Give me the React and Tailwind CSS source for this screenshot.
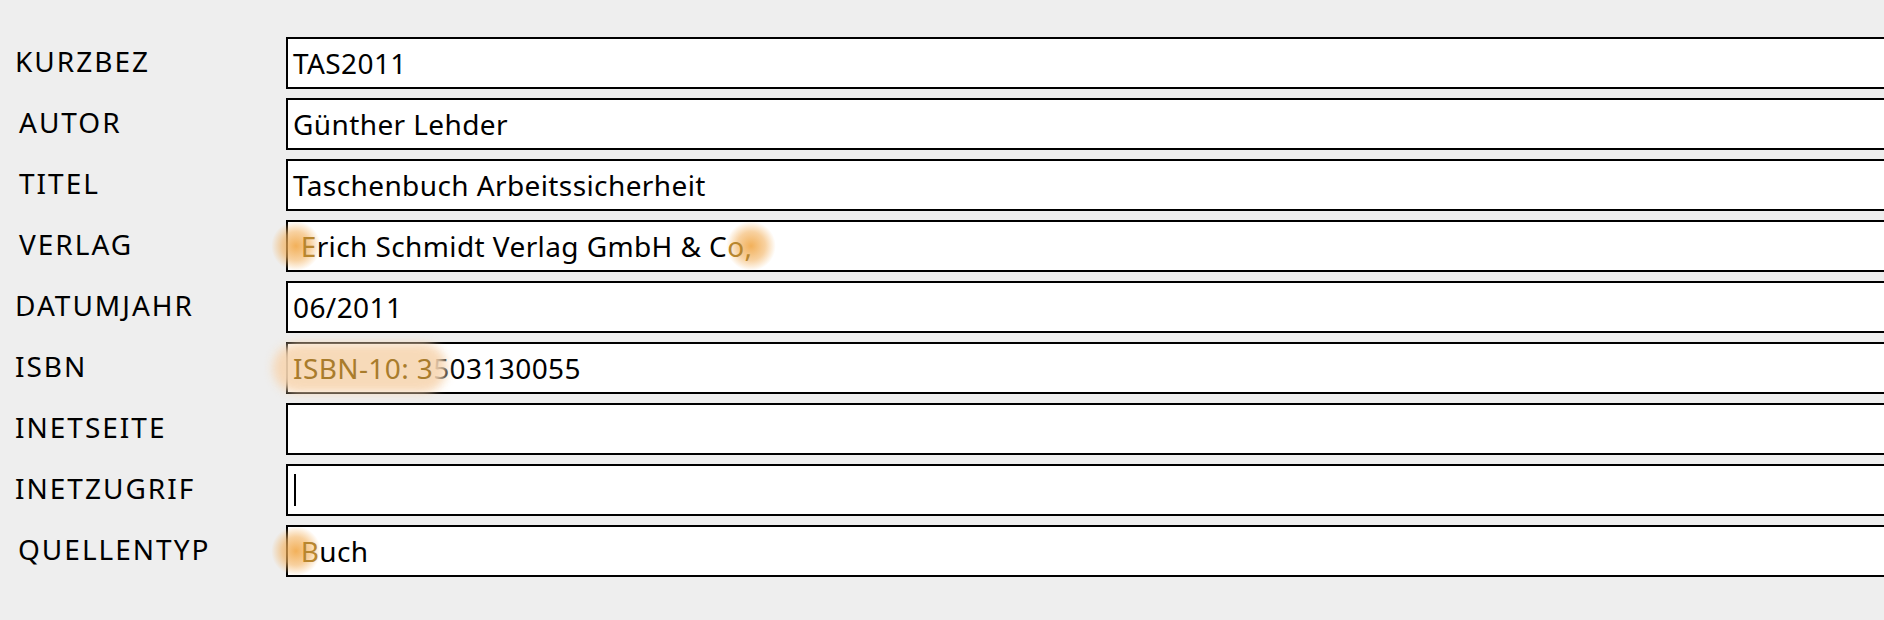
import React from "react";

const FONT = { fontFamily: '"Noto Sans", "Open Sans", sans-serif' };

// weicher Orange-Schimmer hinter einzelnen Zeichen
function Glow({ children, className }) {
  return (
    <span className="relative">
      <span
        className={`pointer-events-none absolute top-1/2 h-[50px] w-[50px] -translate-y-1/2 rounded-full bg-[radial-gradient(circle,rgba(241,168,72,0.9)_0%,rgba(243,178,95,0.6)_40%,rgba(245,190,120,0)_70%)] ${className}`}
      />
      <span className="relative text-[#b8862e]">{children}</span>
    </span>
  );
}

const ROWS = [
  { label: "KURZBEZ", pad: "pl-[15px]", value: "TAS2011" },
  { label: "AUTOR", pad: "pl-[19px]", value: "Günther Lehder" },
  { label: "TITEL", pad: "pl-[19px]", value: "Taschenbuch Arbeitssicherheit" },
  {
    label: "VERLAG",
    pad: "pl-[19px]",
    value: (
      <>
        <Glow className="-left-[22px]">{"\u00a0E"}</Glow>
        rich Schmidt Verlag GmbH &amp; C
        <Glow className="-left-[1px]">o,</Glow>
      </>
    ),
  },
  { label: "DATUMJAHR", pad: "pl-[15px]", value: "06/2011" },
  {
    label: "ISBN",
    pad: "pl-[15px]",
    value: (
      <>
        <span className="relative">
          <span className="pointer-events-none absolute -bottom-[4px] -left-[20px] -right-[14px] -top-[4px] rounded-full bg-[#f7d6b2] opacity-90 blur-[5px]" />
          <span className="relative text-[#a97c2c]">ISBN-10: 3</span>
        </span>
        503130055
      </>
    ),
  },
  { label: "INETSEITE", pad: "pl-[15px]", value: "" },
  { label: "INETZUGRIF", pad: "pl-[15px]", value: null, caret: true },
  {
    label: "QUELLENTYP",
    pad: "pl-[18px]",
    value: (
      <>
        <Glow className="-left-[22px]">{"\u00a0B"}</Glow>
        uch
      </>
    ),
  },
];

export default function App() {
  return (
    <div className="h-[620px] w-full overflow-hidden bg-[#eeeeee] pt-[37px] text-black" style={FONT}>
      <div className="flex flex-col gap-[9px]">
        {ROWS.map((r) => (
          <div key={r.label} className="flex h-[52px] items-center">
            <div className={`w-[286px] shrink-0 pb-[4px] text-[28px] tracking-[2px] ${r.pad}`}>{r.label}</div>
            <div className="-mr-[20px] flex h-[52px] flex-1 items-center whitespace-nowrap border-2 border-black bg-white pl-[5px] text-[28px] tracking-[0.4px]">
              {r.caret ? <span className="ml-[1px] h-[32px] w-[2px] bg-black" /> : r.value}
            </div>
          </div>
        ))}
      </div>
    </div>
  );
}
